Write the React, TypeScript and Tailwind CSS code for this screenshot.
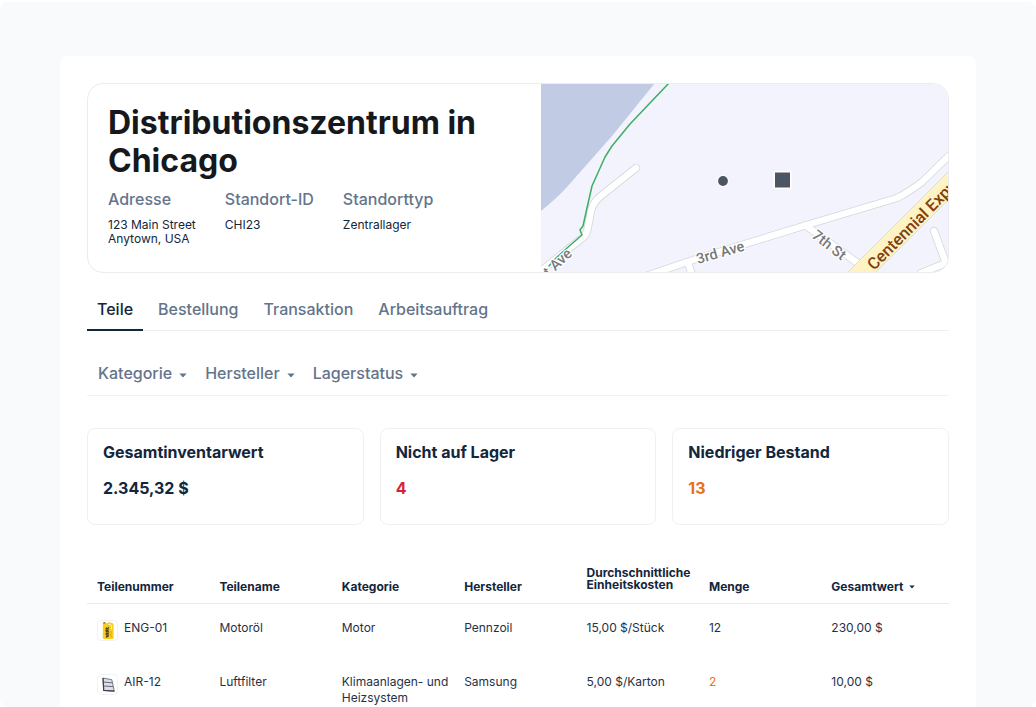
import { useState } from "react";

const facts = [
  { label: "Adresse", value: ["123 Main Street", "Anytown, USA"] },
  { label: "Standort-ID", value: ["CHI23"] },
  { label: "Standorttyp", value: ["Zentrallager"] },
];

const tabs = ["Teile", "Bestellung", "Transaktion", "Arbeitsauftrag"];

const filters = ["Kategorie", "Hersteller", "Lagerstatus"];

const stats = [
  { label: "Gesamtinventarwert", value: "2.345,32 $", color: "text-[#12263c]" },
  { label: "Nicht auf Lager", value: "4", color: "text-[#d81f3c]" },
  { label: "Niedriger Bestand", value: "13", color: "text-[#e8701a]" },
];

const parts = [
  {
    id: "ENG-01",
    icon: <OilCan />,
    name: "Motoröl",
    category: "Motor",
    maker: "Pennzoil",
    cost: "15,00 $/Stück",
    amount: "12",
    low: false,
    total: "230,00 $",
  },
  {
    id: "AIR-12",
    icon: <AirFilter />,
    name: "Luftfilter",
    category: "Klimaanlagen- und Heizsystem",
    maker: "Samsung",
    cost: "5,00 $/Karton",
    amount: "2",
    low: true,
    total: "10,00 $",
  },
];

function OilCan() {
  return (
    <svg viewBox="0 0 19 19" className="size-[19px]" aria-hidden="true">
      <path d="M4.800 1.600h2.200l.8.8 3.200-1.200 3.600.8 1 2V17l-1 .9H5.700l-.9-.9V4z" fill="#f7cd1e" />
      <path d="M10.300 3.400l2.700.4.600 1.500v3" fill="none" stroke="#fff3b8" strokeWidth="1" />
      <path d="M5.400 1.200h2v1.300h-2z" fill="#7c6412" />
      <path d="M7.500 7.200l1.200-1 .6.800 1.500-1.400.2 2.600-.6 1.200.8 1.600-.6 1.500.6 1.200-.8 2.400-2.600.6.300-2.400-.7-1.200.7-1.600-.7-1.700z" fill="#4a4318" />
      <path d="M7.200 9l4-1.200M7.200 12l4-1M7.400 14.500l3.600-.8" stroke="#d9ac10" strokeWidth=".6" />
      <path d="M13 10v6" stroke="#e8a50c" strokeWidth="1" />
    </svg>
  );
}

function AirFilter() {
  return (
    <svg viewBox="0 0 19 19" className="size-[19px]" aria-hidden="true">
      <path d="M5 3l8.800 1.700 2.500 11.500-10.600-.8z" fill="#dcdee8" stroke="#6a6b7a" strokeWidth=".9" strokeLinejoin="round" />
      <path d="M5.200 7l9 .8M5.400 11l9.600.6" stroke="#5a5b6b" strokeWidth=".9" />
      <path d="M5 3l.7 12.400 10.600.8" fill="none" stroke="#3d3e50" strokeWidth="1.200" strokeLinejoin="round" />
    </svg>
  );
}

function Caret({ className }: { className: string }) {
  return (
    <svg viewBox="0 0 8 5" className={className} aria-hidden="true">
      <path d="M.4.5h7.200L4.500 3.900a.7.700 0 0 1-1 0z" fill="currentColor" />
    </svg>
  );
}

const roads = [
  "M95 85L61 112Q52 119 50 128L47 144Q46 152 40 156L26 167L0 188",
  "M99 195L152 177L269 141L356 115Q368 109 381 99L414 67",
  "M147 179L152 196",
  "M264 142L318 181",
  "M393 148L405 180L380 190",
];

function SiteMap() {
  return (
    <svg
      viewBox="0 1 407 188"
      preserveAspectRatio="xMidYMid slice"
      className="absolute inset-0 size-full"
      role="img"
      aria-label="Karte"
    >
      <rect width="408" height="190" fill="#f2f3fc" />
      <path d="M0 0H114L71 53L26 104Q16 115 0 128Z" fill="#c1cce4" />
      <g fill="none" strokeLinecap="round" strokeLinejoin="round">
        {roads.map((d) => (
          <path key={d} d={d} stroke="#d5d6dc" strokeWidth="8" />
        ))}
        {roads.map((d) => (
          <path key={d} d={d} stroke="#fff" strokeWidth="6.500" />
        ))}
        <path
          d="M128 0L89 41L71 63L64 74L51 103L46 125L42 143L39 147L41 152L26 165L14 176L8 183"
          stroke="#3fad62"
          strokeWidth="1.500"
        />
      </g>
      <path d="M306 190L408 88V116L334 190Z" fill="#fdf3c4" />
      <path d="M306 190L408 88M334 190L408 116" stroke="#ecdcae" strokeWidth="1" />
      <g
        fontFamily="Roboto, sans-serif"
        fontWeight="500"
        fill="#77787c"
        stroke="#fff"
        strokeWidth="2.500"
        strokeLinejoin="round"
        paintOrder="stroke"
      >
        <text x="157" y="181" fontSize="14.500" transform="rotate(-16 157 181)">3rd Ave</text>
        <text x="270" y="154" fontSize="14.500" transform="rotate(38 270 154)">7th St</text>
        <text x="8" y="194" fontSize="14.500" transform="rotate(-43 8 194)">t Ave</text>
        <text x="333" y="188" fontSize="16.500" fill="#7f4010" stroke="#fdf3c4" strokeWidth="2" transform="rotate(-45 333 188)">
          Centennial Expy
        </text>
      </g>
      <circle cx="182" cy="98" r="6" fill="#fff" />
      <circle cx="182" cy="98" r="4.900" fill="#4b5563" />
      <rect x="232.500" y="88" width="18" height="18" fill="#fff" />
      <rect x="234" y="89.500" width="15" height="15" fill="#4b5563" />
    </svg>
  );
}

export default function App() {
  const [active, setActive] = useState("Teile");

  return (
    <div className="h-screen overflow-hidden bg-white pt-0.5 font-['Inter',sans-serif] text-[#12263c]">
      <div className="h-full overflow-hidden rounded-lg bg-[#f8fafc] px-[60px] pt-[54px]">
        <main className="min-h-full rounded-t-lg bg-white px-[27px] pt-[27px]">
          <section className="flex overflow-hidden rounded-2xl border border-[#eaecef]">
            <div className="flex-1 px-5 pt-5 pb-[26px]">
              <h1 className="text-[32px] leading-[38px] font-bold text-[#16181b]">
                Distributionszentrum in Chicago
              </h1>
              <dl className="mt-[7px] flex gap-[29px]">
                {facts.map((f) => (
                  <div key={f.label}>
                    <dt className="text-base leading-6 font-medium text-[#64748b]">{f.label}</dt>
                    <dd className="mt-[7px] text-xs leading-[14px]">
                      {f.value.map((line) => (
                        <div key={line}>{line}</div>
                      ))}
                    </dd>
                  </div>
                ))}
              </dl>
            </div>
            <div className="relative w-[407px]">
              <SiteMap />
            </div>
          </section>

          <nav className="mt-[22px] flex gap-[5px] border-b border-[#eceef1]">
            {tabs.map((t) => (
              <button
                key={t}
                type="button"
                onClick={() => setActive(t)}
                className={
                  t === active
                    ? "-mb-px border-b-2 border-[#12263c] px-2.5 pt-0.5 pb-2 text-base leading-6 font-medium text-[#12263c]"
                    : "-mb-px border-b-2 border-transparent px-2.5 pt-0.5 pb-2 text-base leading-6 font-medium text-[#64748b]"
                }
              >
                {t}
              </button>
            ))}
          </nav>

          <div className="mt-[30px] flex gap-[18px] border-b border-[#f1f2f5] pb-2.5 pl-[11px]">
            {filters.map((f) => (
              <label key={f} className="flex items-center gap-[7px] text-[#64748b]">
                <select
                  aria-label={f}
                  className="[field-sizing:content] appearance-none bg-transparent text-base leading-6 font-medium"
                >
                  <option>{f}</option>
                </select>
                <Caret className="mt-1 h-[5px] w-2" />
              </label>
            ))}
          </div>

          <section className="mt-8 grid grid-cols-3 gap-4">
            {stats.map((s) => (
              <div key={s.label} className="rounded-lg border border-[#eef0f2] px-[15px] pt-[11px] pb-6">
                <h2 className="text-base leading-6 font-bold">{s.label}</h2>
                <p className={`mt-3 text-base leading-6 font-bold ${s.color}`}>{s.value}</p>
              </div>
            ))}
          </section>

          <table className="mt-[42px] w-full table-fixed border-collapse text-left text-xs">
            <colgroup>
              <col className="w-[14.2%]" />
              <col className="w-[14.2%]" />
              <col className="w-[14.2%]" />
              <col className="w-[14.2%]" />
              <col className="w-[14.2%]" />
              <col className="w-[14.2%]" />
              <col />
            </colgroup>
            <thead>
              <tr className="border-b border-[#e9ecef] align-bottom leading-3">
                <th className="pb-2.5 pl-2.5">Teilenummer</th>
                <th className="pb-2.5 pl-2.5">Teilename</th>
                <th className="pb-2.5 pl-2.5">Kategorie</th>
                <th className="pb-2.5 pl-2.5">Hersteller</th>
                <th className="pb-3 pl-2.5">Durchschnittliche Einheitskosten</th>
                <th className="pb-2.5 pl-2.5">Menge</th>
                <th className="pb-2.5 pl-2.5" aria-sort="descending">
                  <button type="button" className="flex items-center gap-1.5 leading-3 font-bold">
                    Gesamtwert
                    <Caret className="h-1 w-1.5" />
                  </button>
                </th>
              </tr>
            </thead>
            <tbody className="text-[#1f3147]">
              {parts.map((p) => (
                <tr key={p.id} className="h-[54px] align-top leading-4">
                  <td className="pt-4 pl-2.5">
                    <div className="flex items-start gap-1.5">
                      <span className="flex size-[21px] items-center justify-center rounded-sm border border-[#f1f2f5]">
                        {p.icon}
                      </span>
                      {p.id}
                    </div>
                  </td>
                  <td className="pt-4 pl-2.5">{p.name}</td>
                  <td className="pt-4 pl-2.5">{p.category}</td>
                  <td className="pt-4 pl-2.5">{p.maker}</td>
                  <td className="pt-4 pl-2.5">{p.cost}</td>
                  <td className={p.low ? "pt-4 pl-2.5 text-[#e8701a]" : "pt-4 pl-2.5"}>{p.amount}</td>
                  <td className="pt-4 pl-2.5">{p.total}</td>
                </tr>
              ))}
            </tbody>
          </table>
        </main>
      </div>
    </div>
  );
}
